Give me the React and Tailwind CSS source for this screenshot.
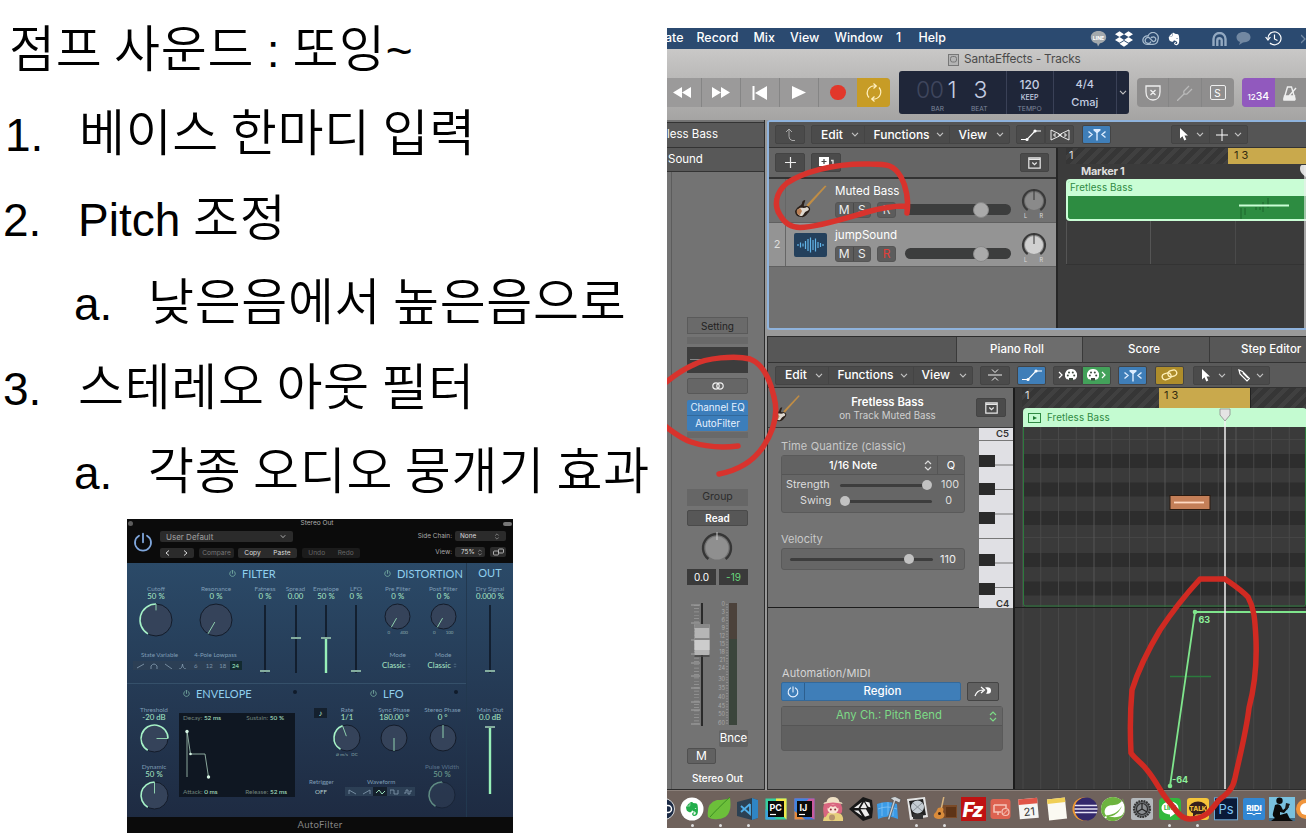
import React from "react";
import { FaDropbox, FaEvernote } from "react-icons/fa";
import { SiSpring } from "react-icons/si";

/* ---------- shared glyphs ---------- */
const Chevron = ({ className = "" }) => (
  <svg className={"h-[5px] w-[8px] shrink-0 " + className} viewBox="0 0 8 5" fill="none" stroke="#c4c4c4" strokeWidth="1.1">
    <path d="M1 .8 4 4 7 .8" />
  </svg>
);
const UpDown = ({ color = "#ddd", className = "" }) => (
  <svg className={"h-[11px] w-[8px] shrink-0 " + className} viewBox="0 0 8 11" fill="none" stroke={color} strokeWidth="1.2">
    <path d="M1 4 4 1 7 4M1 7l3 3 3-3" />
  </svg>
);
const Power = ({ color, className = "" }) => (
  <svg className={className} viewBox="0 0 20 20" fill="none" stroke={color} strokeWidth="1.8" strokeLinecap="round">
    <path d="M10 1.2v8.6M6 3.2a8 8 0 1 0 8 0" />
  </svg>
);
const Guitar = ({ className = "" }) => (
  <svg className={className} viewBox="0 0 34 34">
    <path d="M12.500 21 31 1.500l1.500.8L14 23z" fill="#c08d45" />
    <path d="M1 27c0 3 2 6 6 6 4 1 6-3 8-5 1-2 2-3 0-5-2-2-4 0-5-1s2-6 1-6-3 1-3 3-3 3-5 5z" fill="#2b211b" />
    <path d="M3 27c0 3 2 5 5 5 2-1 2-4 5-5s2-3 0-4c-3 2-6 0-7 1s-3 1-3 3z" fill="#ded8cf" />
    <path d="M3 26c-1 3 1 5 3 5l2-4-2-3z" fill="#b97f55" />
  </svg>
);
const Curve = () => (
  <svg className="h-[14px] w-[20px]" viewBox="0 0 20 14" fill="none" stroke="#fff" strokeWidth="1.2">
    <path d="M0 11.5h6L14 3h6" />
    <circle cx="6" cy="11.5" r="1.6" fill="#fff" stroke="none" />
    <circle cx="14" cy="3" r="1.6" fill="#fff" stroke="none" />
  </svg>
);
const Catch = () => (
  <svg className="h-[13px] w-[20px]" viewBox="0 0 20 13" fill="none" stroke="#dcecff" strokeWidth="1.4">
    <path d="m1.500 3.500 3.500 3-3.500 3M18.500 3.500l-3.500 3 3.500 3M10 4v8.500" />
    <path d="M6.500 1h7v1.500L10.500 5h-1L6.500 2.500z" fill="#dcecff" stroke="none" />
  </svg>
);
const Arrow = () => (
  <svg className="h-[13px] w-[9px]" viewBox="0 0 9 13" fill="#fff">
    <path d="M0 0v10.500l2.500-2.300L4.300 12.500l2-.9-1.800-4H8z" />
  </svg>
);
const ViewBox = () => (
  <svg className="h-[12px] w-[13px]" viewBox="0 0 13 12" fill="none" stroke="#e8e8e8" strokeWidth="1.200">
    <path d="M.8.8h11.400v10.400H.8zM.8 2.300h11.400M4.300 5.500l2.200 2.200 2.200-2.200" />
  </svg>
);
const Palette = () => (
  <svg className="h-[12px] w-[12px]" viewBox="0 0 12 12">
    <path d="M6 0a6 6 0 0 0-5 9.500C2 11 3 10 4 11h4c1-1 2 0 3-1.500A6 6 0 0 0 6 0z" fill="#fff" />
    <g fill="#3d4a3f"><circle cx="2.800" cy="6.500" r="1" /><circle cx="4" cy="3.500" r="1" /><circle cx="7.800" cy="3.500" r="1" /><circle cx="9.200" cy="6.500" r="1" /></g>
    <path d="M4 11.500V9h4v2.500" fill="#3d4a3f" />
  </svg>
);
const Btn = ({ className = "", bg = "bg-[#4b4b4b]", children }) => (
  <div className={"flex h-[19px] shrink-0 items-center justify-center rounded-[2px] border border-[#444] " + bg + " " + className}>{children}</div>
);

/* ---------- slide text ---------- */
const Ko = ({ children }) => <span className="font-['Noto_Sans_CJK_KR',sans-serif] text-[50px] font-[350] tracking-[.65px]">{children}</span>;
const Line = ({ mark, className, markClass, children }) => (
  <div className={"flex h-[84.4px] items-baseline whitespace-pre " + className}>
    {mark && <span className={"shrink-0 " + markClass}>{mark}</span>}
    <span>{children}</span>
  </div>
);

/* ---------- AutoFilter plug-in ---------- */
const arc = (cx, cy, r, a, b) => {
  const p = (d) => [cx + r * Math.sin((d * Math.PI) / 180), cy - r * Math.cos((d * Math.PI) / 180)];
  const [x1, y1] = p(a), [x2, y2] = p(b);
  return `M${x1} ${y1}A${r} ${r} 0 ${b - a > 180 ? 1 : 0} 1 ${x2} ${y2}`;
};
const Knob = ({ size, to, angle, dim, inner = 0.15 }) => {
  const c = size / 2, r = c - 2, t = (angle * Math.PI) / 180;
  return (
    <svg style={{ width: size, height: size }} className="shrink-0" viewBox={`0 0 ${size} ${size}`} opacity={dim ? 0.8 : 1}>
      <circle cx={c} cy={c} r={r} fill="#35435a" stroke="#141c2a" strokeWidth="1" />
      {to !== undefined && <path d={arc(c, c, r, -150, to)} fill="none" stroke="#a6f2c8" strokeWidth="1.600" />}
      <path d={`M${c + r * inner * Math.sin(t)} ${c - r * inner * Math.cos(t)}L${c + r * Math.sin(t)} ${c - r * Math.cos(t)}`} stroke="#8fd0ae" strokeWidth="1" />
    </svg>
  );
};
const Lab = ({ className = "", label, value, children }) => (
  <div className={"flex shrink-0 flex-col items-center whitespace-nowrap " + className}>
    <div className="h-[7px] text-[6.400px] text-[#7f9db5]">{label}</div>
    <div className="h-[9px] text-[7.800px] text-[#a9e8c6]">{value}</div>
    {children}
  </div>
);
const VSlider = ({ pos, fill }) => (
  <svg className="mt-[3px] h-[70px] w-[14px]" viewBox="0 0 14 70">
    <path d="M7 0v68" stroke="#0c1420" strokeWidth="1.500" />
    {fill && <path d={`M7 ${pos}V68`} stroke="#97f0b8" strokeWidth="2.400" />}
    <path d={`M2 ${pos}h10`} stroke="#84ad9f" strokeWidth="2" />
  </svg>
);
const Title = ({ className, children }) => (
  <div className={"flex h-[12px] items-center gap-[6px] text-[11px] text-[#90cfee] " + className}>
    <Power color="#90cfb8" className="h-[7px] w-[7px]" />{children}
  </div>
);
const Wave = ({ d, on }) => (
  <div className={"flex h-[9px] w-[14px] items-center justify-center " + (on ? "bg-[#15202c]" : "bg-[#2c3f55]")}>
    <svg className="h-[6px] w-[9px]" viewBox="0 0 9 6" fill="none" stroke={on ? "#a6f2c8" : "#7d94a8"} strokeWidth=".9"><path d={d} /></svg>
  </div>
);
function Plugin() {
  return (
    <div className="ml-[127px] flex h-[314px] w-[386px] flex-col overflow-hidden bg-[#0b0b0b] font-[Lato,sans-serif] leading-none">
      <div className="flex h-[9px] items-center justify-between px-px font-[Inter,sans-serif] text-[6.500px] text-[#b0b0b0]">
        <span className="h-[5px] w-[5px] rounded-full bg-[#5c5c5c]" /><span className="pr-[2px]">Stereo Out</span><span className="h-[4px] w-[9px] rounded-full bg-[#777]" />
      </div>
      <div className="flex h-[35px] font-[Inter,sans-serif]">
        <Power color="#7fa6dc" className="mt-[4px] ml-[6px] h-[21px] w-[20px]" />
        <div className="ml-[7px] flex w-[206px] flex-col gap-[6px] pt-[3px]">
          <div className="flex h-[11px] w-[133px] items-center justify-between rounded-[2px] bg-[#2b2b2b] px-[6px] text-[8px] text-[#a0a0a0]">User Default<Chevron className="scale-75" /></div>
          <div className="flex h-[10px] text-[6.600px]">
            <div className="flex w-[34px] items-center justify-around rounded-[2px] bg-[#2b2b2b]">
              <svg className="h-[6px] w-[24px]" viewBox="0 0 24 6" fill="none" stroke="#ddd"><path d="M4 .5 1 3l3 2.500M19 .5 22 3l-3 2.500" /></svg>
            </div>
            <div className="ml-[5px] flex w-[35px] items-center justify-center rounded-[2px] bg-[#222] text-[#777]">Compare</div>
            <div className="ml-[4px] flex w-[59px] items-center justify-around rounded-[2px] bg-[#2b2b2b] text-[#ddd]"><span>Copy</span><span>Paste</span></div>
            <div className="ml-[5px] flex w-[58px] items-center justify-around rounded-[2px] bg-[#1b1b1b] text-[#666]"><span>Undo</span><span>Redo</span></div>
          </div>
        </div>
        <div className="flex grow flex-col gap-[6px] pt-[3px] pr-[7px] text-[6.400px] text-[#aaa]">
          <div className="flex h-[10px] items-center justify-end gap-[3px]">Side Chain:
            <div className="flex h-full w-[51px] items-center justify-between rounded-[2px] bg-[#2b2b2b] px-[5px] text-[#ddd]">None<UpDown color="#999" className="scale-[.6]" /></div></div>
          <div className="flex h-[10px] items-center justify-end">View:
            <div className="ml-[3px] flex h-full w-[30px] items-center justify-between rounded-[2px] bg-[#2b2b2b] pr-[1px] pl-[6px] text-[#ddd]">75%<UpDown color="#999" className="scale-[.6]" /></div>
            <div className="ml-[5px] flex h-full w-[16px] items-center justify-center rounded-[2px] bg-[#2b2b2b]"><svg className="h-[8px] w-[11px]" viewBox="0 0 11 8" fill="none" stroke="#ccc" strokeWidth=".8"><rect x=".5" y="3" width="5" height="4" rx="1" /><rect x="5.500" y="1" width="5" height="4" rx="1" /></svg></div></div>
        </div>
      </div>
      <div className="flex h-[254px] bg-gradient-to-b from-[#2b4a68] to-[#1e2b42]">
        <div className="w-[340px] border-r border-[#22384f]">
          <div className="flex h-[121px] border-b border-[#35506a]">
            <div className="w-[248px]">
              <Title className="mt-[4px] ml-[102px]">FILTER</Title>
              <div className="mt-[7px] flex h-[90px]">
                <div className="flex w-[123px] flex-col">
                  <div className="flex h-[66px]">
                    <Lab className="ml-[8px] w-[42px]" label="Cutoff" value="50 %"><Knob size={36} to={0} angle={0} inner={0.6} /></Lab>
                    <Lab className="ml-[18px] w-[42px]" label="Resonance" value="0 %"><Knob size={36} angle={-150} /></Lab>
                  </div>
                  <div className="flex h-[9px] text-[6.200px] text-[#7f9db5]"><span className="ml-[14px]">State Variable</span><span className="ml-[16px]">4-Pole Lowpass</span></div>
                  <div className="ml-[6px] flex text-[6px] text-[#7d94a8]">
                    <Wave d="M1 5 8 1" /><Wave d="M1 6V3q3-4 6 0v3" /><Wave d="M1 1l7 5" /><Wave d="M1 6q3 0 3.500-5Q5 6 8 6" />
                    {["6", "12", "18"].map((n) => <span key={n} className="flex h-[9px] w-[13.500px] items-center justify-center bg-[#2c3f55]">{n}</span>)}
                    <span className="flex h-[9px] w-[12px] items-center justify-center bg-[#122a30] text-[#a6f2c8]">24</span>
                  </div>
                </div>
                <Lab className="w-[30px]" label="Fatness" value="0 %"><VSlider pos={66} /></Lab>
                <Lab className="w-[31px]" label="Spread" value="0.00"><VSlider pos={33} /></Lab>
                <Lab className="w-[30px]" label="Envelope" value="50 %"><VSlider pos={33} fill /></Lab>
                <Lab className="w-[30px]" label="LFO" value="0 %"><VSlider pos={66} /></Lab>
              </div>
            </div>
            <div className="w-[91px]">
              <Title className="mt-[4px] ml-[9px]">DISTORTION</Title>
              <div className="mt-[7px] flex">
                {[["Pre Filter", "400"], ["Post Filter", "100"]].map(([n, m]) => (
                  <Lab key={n} className="w-[45.500px]" label={n} value="0 %">
                    <Knob size={29} angle={-150} />
                    <div className="flex h-[21px] gap-[10px] text-[4.500px] text-[#8aa]"><span>0</span><span>{m}</span></div>
                    <div className="h-[8px] text-[6.400px] text-[#7f9db5]">Mode</div>
                    <div className="flex items-center text-[7.800px] text-[#a9e8c6]">Classic<UpDown color="#8ab" className="scale-[.4]" /></div>
                  </Lab>
                ))}
              </div>
            </div>
          </div>
          <div className="flex h-[133px]">
            <div className="w-[178px]">
              <div className="flex items-center justify-between pr-[8px]"><Title className="mt-[3px] ml-[56px]">ENVELOPE</Title><span className="h-[4px] w-[4px] rounded-full bg-[#101b2a]" /></div>
              <div className="mt-[8px] flex">
                <div className="ml-[4px] w-[48px]">
                  <Lab className="h-[57px] w-[46px]" label="Threshold" value="-20 dB"><Knob size={31} to={90} angle={90} /></Lab>
                  <Lab className="w-[46px]" label="Dynamic" value="50 %"><Knob size={31} to={0} angle={0} /></Lab>
                </div>
                <div className="mt-[6px] flex h-[84px] w-[116px] flex-col bg-[#0f1722] px-[4px] py-[2px] text-[6.400px] text-[#71837c]">
                  <div className="flex justify-between pr-[7px]"><span>Decay: <b className="font-normal text-[#b9eed0]">52 ms</b></span><span>Sustain: <b className="font-normal text-[#b9eed0]">50 %</b></span></div>
                  <svg className="h-[68px] w-[108px] shrink-0" viewBox="0 0 108 68" fill="none" stroke="#a9cdbb" strokeWidth=".8">
                    <path d="M4 10v46M4 10l3.500 23H22l3.500 23" /><g fill="#d6f5e4" stroke="none"><circle cx="4" cy="10.500" r="1.700" /><circle cx="7.500" cy="33" r="1.300" /><circle cx="25.500" cy="56" r="1.700" /></g>
                  </svg>
                  <div className="flex justify-between pr-[4px]"><span>Attack: <b className="font-normal text-[#b9eed0]">0 ms</b></span><span>Release: <b className="font-normal text-[#b9eed0]">52 ms</b></span></div>
                </div>
              </div>
            </div>
            <div className="w-[161px]">
              <div className="flex items-center justify-between pr-[8px]"><Title className="mt-[3px] ml-[65px]">LFO</Title><span className="h-[4px] w-[4px] rounded-full bg-[#101b2a]" /></div>
              <div className="mt-[8px] flex">
                <div className="w-[116px]">
                  <div className="flex h-[72px]">
                    <div className="mt-px ml-[9px] flex h-[10px] w-[13px] items-center justify-center bg-[#14202e] text-[8px] text-[#c8f5dc]">♪</div>
                    <Lab className="ml-[1px] w-[38px]" label="Rate" value="1/1"><Knob size={30} to={-20} angle={-20} /><span className="text-[4.500px] text-[#8aa]">⌀ m/s &nbsp; DC</span></Lab>
                    <Lab className="ml-[3px] w-[50px]" label="Sync Phase" value="180.00 °"><Knob size={30} angle={180} inner={0} /></Lab>
                  </div>
                  <div className="flex text-[6.200px] text-[#7f9db5]"><span className="ml-[4px] w-[58px]">Retrigger</span><span>Waveform</span></div>
                  <div className="mt-[2px] flex items-center"><span className="ml-[10px] w-[30px] text-[6.200px] text-[#b9cfd0]">OFF</span>
                    <Wave d="M1 5V1l7 4" /><Wave d="M1 5l7-4v4" /><Wave on d="M0 4 3 1l3 4 3-3" /><Wave d="M0 5V1h4v4h4V1" /><Wave d="M0 4h2V1h2v4h2V2h2" /></div>
                </div>
                <div className="w-[45px]">
                  <Lab className="h-[57px] w-[43px]" label="Stereo Phase" value="0 °"><Knob size={30} angle={0} inner={0} /></Lab>
                  <Lab className="w-[42px] opacity-60" label="Pulse Width" value="50 %"><Knob size={30} to={0} angle={0} inner={0.9} dim /></Lab>
                </div>
              </div>
            </div>
          </div>
        </div>
        <div className="flex w-[46px] flex-col items-center">
          <div className="mt-[4px] h-[19px] text-[11px] text-[#90cfee]">OUT</div>
          <Lab className="h-[121px]" label="Dry Signal" value="0.000 %"><VSlider pos={66} /></Lab>
          <Lab label="Main Out" value="0.0 dB"><VSlider pos={1} fill /></Lab>
        </div>
      </div>
      <div className="flex grow items-center justify-center text-[9.500px] tracking-[.3px] text-[#858585]">AutoFilter</div>
    </div>
  );
}

/* ---------- Logic: top area ---------- */
const Seg = ({ className = "", children }) => <div className={"flex shrink-0 items-center justify-center border-[#858585] " + className}>{children}</div>;
function TopBar() {
  return (
    <>
      <div className="flex h-[21px] items-center bg-[#2b4a70] text-[12.400px] font-medium whitespace-nowrap text-white">
        <span className="-ml-[2px] w-[31.500px]">ate</span><span className="w-[57px]">Record</span><span className="w-[36.500px]">Mix</span><span className="w-[44.500px]">View</span><span className="w-[61.500px]">Window</span><span className="w-[22.500px]">1</span><span className="w-[171px]">Help</span>
        <svg className="h-[16px] w-[17px]" viewBox="0 0 17 16"><path d="M8.500 0C4 0 .8 2.600.8 6.300c0 3.500 2.700 5.600 6.200 6.200l1 3 2-3.200c3.800-.8 6.200-3 6.200-6C16.200 2.600 13 0 8.500 0z" fill="#a3a9ad" /><text x="8.500" y="8.500" fontSize="5.200" fontWeight="700" textAnchor="middle" fill="#fff">LINE</text></svg>
        <FaDropbox className="ml-[8px] h-[18px] w-[18px]" />
        <svg className="ml-[9px] h-[13px] w-[17px]" viewBox="0 0 17 13" fill="none" stroke="#a8bccf" strokeWidth="1.300"><path d="M5 12.300a4.200 4.200 0 1 1 1-8.300 5 5 0 0 1 10 3.500c-.3 3-2.500 4.800-5 4.800H5z" /><path d="M9 9.500A3 3 0 1 1 7 5.500l4 4a2.300 2.300 0 1 0 0-4.500q-1.500 0-2 1" /></svg>
        <FaEvernote className="ml-[8px] h-[14px] w-[14px]" />
        <svg className="ml-[31px] h-[14px] w-[15px]" viewBox="0 0 15 14" fill="none" stroke="#93a9c1" strokeWidth="2.400"><path d="M1.500 14V7a6 6 0 0 1 12 0v7M5.300 14V8.500a2.200 2.200 0 0 1 4.400 0V14" /></svg>
        <svg className="ml-[9px] h-[13px] w-[15px]" viewBox="0 0 15 13" fill="#7288a2"><path d="M7.500 0C3 0 .5 2.500.5 5.300S3 10 4 10l-1 3 4-2.500c5 0 7.500-2.200 7.500-5.200S12 0 7.500 0z" /></svg>
        <svg className="ml-[14px] h-[15px] w-[17px]" viewBox="0 0 17 15" fill="none" stroke="#fff" strokeWidth="1.200"><path d="M3 7.500A6.500 6.500 0 1 1 5 12M.6 6 3 9l2.400-3M9.500 3.500v4.500l3 1.500" /></svg>
        <svg className="ml-[19px] h-[12px] w-[5px] shrink-0" viewBox="0 0 5 12" fill="none" stroke="#7288a2" strokeWidth="1.300"><path d="m0 2 4 4-4 4" /></svg>
      </div>
      <div className="flex h-[71px] flex-col bg-gradient-to-b from-[#c9c8c7] to-[#a5a4a3]">
        <div className="flex h-[22px] items-center pl-[281px] text-[11.800px] tracking-[-.15px] text-[#4a4a4a]">
          <svg className="mr-[5px] h-[12px] w-[11px]" viewBox="0 0 11 12" fill="#b4b4b4" stroke="#777"><rect x=".5" y=".5" width="10" height="11" /><rect x="2.500" y="2.500" width="6" height="5.500" rx="2" /></svg>
          SantaEffects - Tracks
        </div>
        <div className="flex h-[43px] items-center text-white">
          <div className="flex h-[29px] w-[223px] overflow-hidden rounded-r-[4px] bg-[#9b9a9a]">
            <Seg className="w-[34.500px] border-r pr-[4px]"><svg className="h-[11px] w-[18px]" viewBox="0 0 18 11" fill="#fff"><path d="M9 0v11L0 5.500zM18 0v11L9 5.500z" /></svg></Seg>
            <Seg className="w-[39px] border-r"><svg className="h-[11px] w-[18px]" viewBox="0 0 18 11" fill="#fff"><path d="M0 0v11l9-5.500zM9 0v11l9-5.500z" /></svg></Seg>
            <Seg className="w-[39.500px] border-r"><svg className="h-[14px] w-[15px]" viewBox="0 0 15 14" fill="#fff"><path d="M.5 0h2v14h-2zM15 0v14L3 7z" /></svg></Seg>
            <Seg className="w-[39px] border-r"><svg className="h-[13px] w-[14px]" viewBox="0 0 14 14" fill="#fff" preserveAspectRatio="none"><path d="M0 0v14l14-7z" /></svg></Seg>
            <Seg className="w-[38px]"><span className="h-[15.500px] w-[15.500px] rounded-full bg-[#e2382b]" /></Seg>
            <Seg className="w-[33px] bg-[#c79c26]"><svg className="h-[19px] w-[20px]" viewBox="0 0 20 19" fill="none" stroke="#fff0c0" strokeWidth="1.200"><path d="M5 14.500A7 7 0 0 1 9 3h3M9.500.5 12.300 3l-2.800 2.500M15 4.500A7 7 0 0 1 11 16H8M10.500 13.500 7.700 16l2.800 2.500" /></svg></Seg>
          </div>
          <div className="ml-[9px] flex h-[43px] w-[230px] rounded-[3px] bg-[#1f2639] text-[#c5cee2]">
            <div className="flex w-[107.500px] flex-col border-r border-[#3a4157]">
              <div className="flex h-[33px] items-end pb-[2px] pl-[17px] text-[23px] font-light"><span className="w-[31.500px] tracking-[-.5px] text-[#3f465e]">00</span><span className="w-[26px]">1</span><span>3</span></div>
              <div className="flex pt-[2px] text-[6.600px] text-[#7e869c]"><span className="ml-[32px] w-[40px]">BAR</span><span>BEAT</span></div>
            </div>
            <div className="flex w-[47px] flex-col items-center border-r border-[#3a4157] pt-[8px] text-[12px] font-medium">120<span className="mt-[3px] text-[7px]">KEEP</span><span className="mt-[5px] text-[6.800px] font-normal text-[#7e869c]">TEMPO</span></div>
            <div className="flex w-[63.500px] flex-col items-center gap-[7px] border-r border-[#3a4157] pt-[8px] text-[11px] font-medium"><span>4/4</span><span>Cmaj</span></div>
            <div className="flex grow items-center justify-center"><Chevron /></div>
          </div>
          <div className="ml-[8px] flex h-[29px] w-[97px] rounded-[4px] bg-[#8f8e8e]">
            <Seg className="w-[32px] border-r"><svg className="h-[16px] w-[16px]" viewBox="0 0 16 16" fill="none" stroke="#eee" strokeWidth="1.300"><path d="M1 1h14v6c0 5-3 8-7 8S1 12 1 7zM5.500 5l5 5M10.500 5l-5 5" /></svg></Seg>
            <Seg className="w-[32.500px] border-r"><svg className="h-[16px] w-[16px]" viewBox="0 0 16 16" fill="none" stroke="#b9b9b9" strokeWidth="1.300"><path d="m0 16 7-7M12 1 7 6q-1 4 3 3l5-5" /></svg></Seg>
            <Seg className="w-[32px]"><span className="flex h-[15px] w-[16px] items-center justify-center rounded-[2px] border-[1.500px] border-[#eee] text-[10px]">S</span></Seg>
          </div>
          <div className="ml-[8px] flex h-[29px] grow rounded-l-[4px] bg-[#8f8e8e]">
            <Seg className="w-[32.500px] items-baseline rounded-l-[4px] bg-[#9159be] pt-[9px] text-[10.500px] font-medium"><span className="text-[8px]">12</span>34</Seg>
            <Seg className="grow"><svg className="h-[16px] w-[16px]" viewBox="0 0 16 16" fill="none" stroke="#eee" strokeWidth="1.400"><path d="M2 14 5.500 2h4L13 14z" /><path d="M2.500 11h10v4H2zM7 11l7-8" fill="#eee" /></svg></Seg>
          </div>
        </div>
      </div>
    </>
  );
}

const Menu = ({ className, children, chev = "mr-[5px]" }) => <div className={"flex h-full items-center justify-between " + className}>{children}<Chevron className={chev} /></div>;

const PanKnob = ({ fill }) => (
  <svg className="h-[32px] w-[26px] shrink-0" viewBox="0 0 26 32">
    <path d={arc(13, 13, 11, -145, 145)} fill="none" stroke="#3a3a3a" strokeWidth="2.200" />
    <circle cx="13" cy="13" r="9" fill={fill} /><path d="M13 1v11" stroke="#333" strokeWidth="1" />
    <g fontSize="5.500" fill="#ddd"><text x="3" y="30">L</text><text x="18.500" y="30">R</text></g>
  </svg>
);
const Track = ({ n, name, icon, bg, rec, knob }) => (
  <div className={"flex h-[44px] border-b border-[#606060] " + bg}>
    <div className="flex w-[17px] shrink-0 items-center justify-center border-r border-[#666] text-[11px] text-[#ddd]">{n}</div>
    <div className="flex w-[49px] shrink-0 items-center pl-[8px]">{icon}</div>
    <div className="flex w-[70px] shrink-0 flex-col pt-[7px]">
      <span className="h-[16px] text-[11.600px] whitespace-nowrap text-white">{name}</span>
      <div className="flex h-[16px] text-[12px] text-[#eee]">
        <div className="flex w-[36px] rounded-[3px] border border-[#555] bg-[#5c5c5c]"><span className="flex w-[18px] items-center justify-center border-r border-[#494949]">M</span><span className="flex w-[17px] items-center justify-center">S</span></div>
        <div className={"ml-[6px] flex w-[19px] items-center justify-center rounded-[3px] border border-[#555] bg-[#5c5c5c] " + rec}>R</div>
      </div>
    </div>
    <div className="mt-[25px] flex h-[11px] w-[106px] shrink-0 items-center rounded-full bg-[#3c3d3d] pl-[68px]"><span className="h-[16px] w-[16px] shrink-0 rounded-full border border-[#888] bg-[#aaa]" /></div>
    <div className="mt-[9px] ml-[10px]"><PanKnob fill={knob} /></div>
  </div>
);
const hatch = "bg-[repeating-linear-gradient(135deg,#363636_0px,#363636_5px,#404040_5px,#404040_9px)]";

function Tracks() {
  return (
    <div className="relative flex h-[210px] flex-col overflow-hidden rounded-l-[3px] border-2 border-r-0 border-[#8fb3dd] bg-[#717171]">
      <div className="flex h-[26px] shrink-0 items-center border-b border-[#333] bg-[#555] text-[12px] font-medium text-white">
        <Btn className="ml-[6px] w-[30px]"><svg className="h-[13px] w-[11px]" viewBox="0 0 11 13" fill="none" stroke="#aaa"><path d="M10 12.500H7q-3-1-3-4V1M1 4l3-3 3 3" /></svg></Btn>
        <Btn className="ml-[6px] w-[199px]">
          <Menu className="w-[53px] border-r border-[#444] pl-[9px]">Edit</Menu><Menu className="w-[86px] border-r border-[#444] pl-[9px]">Functions</Menu><Menu className="w-[60px] pl-[9px]">View</Menu>
        </Btn>
        <Btn className="ml-[6px] w-[29px] rounded-r-none"><Curve /></Btn>
        <Btn className="w-[29px] rounded-l-none"><svg className="h-[12px] w-[20px]" viewBox="0 0 20 12" fill="none" stroke="#eee"><path d="M1 1v10l8.500-4V5zM19 1v10l-8.500-4V5zM3 6h2M5 4v4M8 6h4M15 4v4M15 6h2" /></svg></Btn>
        <Btn className="ml-[8px] w-[29px]" bg="bg-[#3f7eb8]"><Catch /></Btn>
        <Btn className="ml-[60px] w-[77px]"><Menu className="w-[38px] border-r border-[#444] pl-[8px]"><Arrow /></Menu><Menu className="w-[38px] pl-[6px]"><svg className="h-[12px] w-[12px]" viewBox="0 0 12 12" stroke="#fff"><path d="M6 0v12M0 6h12" /></svg></Menu></Btn>
      </div>
      <div className="flex grow">
        <div className="flex w-[287px] shrink-0 flex-col">
          <div className="flex h-[31px] shrink-0 items-center border-b-2 border-[#333] bg-[#656565]">
            <Btn className="ml-[6px] w-[30px]"><svg className="h-[11px] w-[11px]" viewBox="0 0 11 11" stroke="#eee" strokeWidth="1.200"><path d="M5.500 0v11M0 5.500h11" /></svg></Btn>
            <Btn className="ml-[6px] w-[30px]"><svg className="h-[12px] w-[15px]" viewBox="0 0 15 12"><path d="M0 0h10v9H0z" fill="#fff" /><path d="M5 2v5M2.500 4.500h5" stroke="#444" strokeWidth="1.200" /><path d="M12 3.500h2v8H6" fill="none" stroke="#ddd" strokeWidth="1.400" /></svg></Btn>
            <Btn className="ml-[179px] w-[29px]"><ViewBox /></Btn>
          </div>
          <Track n="1" name="Muted Bass" bg="bg-[#717171]" rec="text-[#ddd]" knob="#8a8a8a" icon={<Guitar className="h-[34px] w-[34px]" />} />
          <Track n="2" name="jumpSound" bg="bg-[#949494]" rec="text-[#e0403a]" knob="#d0d0d0" icon={<div className="flex h-[24px] w-[33px] items-center justify-center rounded-[2px] bg-[#24405c]"><svg className="h-[16px] w-[27px]" viewBox="0 0 27 16" stroke="#62b4e8" strokeWidth="1.200"><path d="M1 7v2M3.500 5.500v5M6 6.500v3M8.500 4v8M11 2v12M13.500 .5v15M16 3v10M18.500 1.500v13M21 5v6M23.500 6v4M26 7v2" /></svg></div>} />
        </div>
        <div className="flex grow flex-col border-l-2 border-[#262626] bg-[#3b3b3b] pl-[8px]">
          <div className={"flex h-[16px] text-[11px] text-[#ddd] " + hatch}><span className="w-[162px] pt-[2px] pl-[3px]">1</span><span className="grow bg-[#c9a94c] pt-[2px] pl-[6px] text-[#332b10]">1 3</span></div>
          <div className="flex h-[15px] items-center pl-[15px] text-[11px] font-bold tracking-[-.3px] text-[#ddd]">Marker 1</div>
          <div className="flex h-[42px] flex-col overflow-hidden rounded-l-[4px] border-2 border-r-0 border-[#c9fdd5] bg-[#2d8c41]">
            <div className="h-[15px] shrink-0 bg-[#c9fdd5] pt-[2px] pl-[2px] text-[9.800px] tracking-[.1px] text-[#2f8a43]">Fretless Bass</div>
            <svg className="h-[23px] w-[237px]" viewBox="0 0 237 23"><path d="M173 12v11M177 12v7M188 11v3M192 11v3M195 6v10M200 2v10" stroke="#1f6b30" strokeWidth="1.200" /><path d="M171 9.500h50" stroke="#c9fdd5" strokeWidth="2" /></svg>
          </div>
          <div className="flex h-[44px] border-b border-[#333]"><span className="w-[84px] border-l border-[#555]" /><span className="w-[85px] border-l border-[#555]" /><span className="grow border-l border-[#4a4a4a]" /></div>
        </div>
      </div>
      <svg className="absolute top-[43px] right-0 h-[163px] w-[6px]" viewBox="0 0 6 163"><path d="M6 0H2Q0 0 0 4t6 8z" fill="#ddd" /><path d="M5 0v163" stroke="#eee" strokeWidth="1.200" /></svg>
    </div>
  );
}

/* ---------- Logic: channel strip ---------- */
function Strip() {
  const marks = ["0", "3", "6", "9", "12", "15", "18", "21", "24", "30", "35", "40", "45", "50", "60"];
  const ys = [3, 11, 19, 27, 35, 43, 51, 59, 67, 78, 87, 96, 105, 113, 122];
  return (
    <div className="flex w-[98px] shrink-0 flex-col border-r border-b border-[#2c2c2c] bg-[#737373] text-[11.500px] text-white">
      <div className="mt-[2px] flex h-[26px] shrink-0 items-center border-t border-b border-[#333] bg-[#585858]">less Bass</div>
      <div className="flex h-[24px] shrink-0 items-center border-b border-[#333] bg-[#585858] pl-px">Sound</div>
      <div className="ml-[4px] flex grow flex-col border-l border-[#5c5c5c] pl-[15px] text-[10px]">
        <div className="mt-[145px] flex h-[17px] w-[61px] shrink-0 items-center justify-center border border-[#5a5a5a] bg-[#6a6a6a] text-[#222]">Setting</div>
        <div className="mt-[3px] h-[7px] w-[61px] shrink-0 bg-[#696969]" />
        <div className="mt-[3px] h-[26px] w-[61px] shrink-0 bg-[#3d3d3d] pt-[12px]"><div className="mx-[3px] h-px bg-[#888]" /></div>
        <div className="mt-[5px] flex h-[16px] w-[61px] shrink-0 items-center justify-center rounded-[2px] border border-[#585858] bg-[#666]"><svg className="h-[8px] w-[12px]" viewBox="0 0 12 8" fill="none" stroke="#eee" strokeWidth="1.200"><circle cx="4" cy="4" r="3.200" /><circle cx="8" cy="4" r="3.200" /></svg></div>
        <div className="mt-[6px] flex h-[31px] w-[61px] shrink-0 flex-col rounded-[2px] bg-[#3c7ebb] text-[9.800px] whitespace-nowrap text-[#e6f1ff]"><span className="flex h-[16px] items-center justify-center border-b border-[#336a9c]">Channel EQ</span><span className="flex h-[15px] items-center justify-center">AutoFilter</span></div>
        <div className="mt-px h-[6px] w-[61px] shrink-0 bg-[#696969]" />
        <div className="mt-[51px] flex h-[17px] w-[61px] shrink-0 items-center justify-center bg-[#666] text-[10.500px] text-[#2c2c2c]">Group</div>
        <div className="mt-[4px] flex h-[16px] w-[61px] shrink-0 items-center justify-center rounded-[2px] border border-[#4a4a4a] bg-[#575757] text-[10px] font-semibold">Read</div>
        <svg className="mt-[5px] ml-[14px] h-[32px] w-[32px] shrink-0" viewBox="0 0 32 32"><path d={arc(16, 17, 14, -142, 142)} fill="none" stroke="#363636" strokeWidth="2.400" /><circle cx="16" cy="17" r="11.500" fill="#8f8f8f" /><path d="M16 1v8" stroke="#ccc" /></svg>
        <div className="mt-[6px] flex h-[16px] shrink-0 gap-[3px] text-[10px]"><span className="flex w-[29px] items-center justify-center bg-[#3a3a3a]">0.0</span><span className="flex w-[29px] items-center justify-center bg-[#3a3a3a] text-[#68d67c]">-19</span></div>
        <svg className="mt-[16px] h-[128px] w-[61px] shrink-0" viewBox="0 0 61 128">
          <path d="M15 2v123" stroke="#2a2a2a" strokeWidth="2" />
          <path d="M4 4h9M4 22h9M4 53h9M4 62h9M4 75h9M4 87h9M4 101h9M4 109h9M4 123h9M4 39h4" stroke="#aaa" strokeWidth=".9" />
          <path d="M9.500 4v119" stroke="#9a9a9a" strokeWidth="5" strokeDasharray=".7 2.600" />
          <rect x="7.500" y="23" width="15" height="31" rx="1" fill="#b5b5b5" /><rect x="7.500" y="23" width="15" height="4" fill="#888" /><path d="M7.500 38h15" stroke="#555" /><rect x="7.500" y="39" width="15" height="10" fill="#ccc" /><path d="M7.500 55h15" stroke="#444" strokeWidth="1.500" />
          <rect x="42" y="2" width="8" height="122" fill="#3b453c" /><rect x="42" y="2" width="8" height="36" fill="#4c423b" />
          <path d="M40 3v120" stroke="#999" strokeWidth="2" strokeDasharray=".7 2" />
          <g fontSize="5.500" fill="#a8a8a8" textAnchor="end">{marks.map((m, i) => <text key={m} x="38" y={ys[i] + 2}>{m}</text>)}</g>
        </svg>
        <div className="mt-px ml-[32px] flex h-[17px] w-[29px] shrink-0 items-center justify-center rounded-[2px] bg-[#636363] text-[11.500px]">Bnce</div>
        <div className="mt-px flex h-[16px] w-[29px] shrink-0 items-center justify-center rounded-[2px] border border-[#505050] bg-[#616161] text-[12px]">M</div>
        <div className="mt-[9px] w-[61px] text-center text-[10px] font-medium whitespace-nowrap">Stereo Out</div>
      </div>
    </div>
  );
}

/* ---------- Logic: editor ---------- */
const HSlider = ({ className }) => <div className={"flex h-[3px] shrink-0 items-center rounded bg-[#3d3d3d] " + className}><span className="h-[10px] w-[10px] shrink-0 rounded-full bg-[#c2c2c2]" /></div>;
const cols = Array.from({ length: 16 }, (_, i) => 8 + i * 17.75);
const darkRows = [27, 55.500, 84, 126, 154.500];
const whiteLines = [12.500, 37, 61.500, 86, 110.500, 135, 159.500];

function Editor() {
  return (
    <div className="relative flex h-[454px] flex-col overflow-hidden border-t border-b border-l border-[#2c2c2c] bg-[#737373]">
      <div className="flex h-[26px] shrink-0 border-b border-[#333] bg-[#575757] text-[12px] font-medium whitespace-nowrap text-white">
        <div className="w-[188px] shrink-0" />
        <div className="flex w-[127px] shrink-0 items-center justify-center border-x border-[#3a3a3a] bg-[#6d6d6d] pr-[5px] text-[11.500px]">Piano Roll</div>
        <div className="flex w-[127px] shrink-0 items-center justify-center border-r border-[#3a3a3a] pr-[4px] text-[11.500px]">Score</div>
        <div className="flex w-[127px] shrink-0 items-center pl-[31px] text-[11.500px]">Step Editor</div>
      </div>
      <div className="flex h-[25px] shrink-0 items-center border-b border-[#333] bg-[#5a5a5a] text-[12px] font-medium text-white">
        <Btn className="ml-[7px] w-[198px]"><Menu className="w-[53px] border-r border-[#444] pl-[9px]">Edit</Menu><Menu className="w-[86px] border-r border-[#444] pl-[9px]">Functions</Menu><Menu className="w-[59px] pl-[8px]">View</Menu></Btn>
        <Btn className="ml-[7px] w-[30px]"><svg className="h-[12px] w-[14px]" viewBox="0 0 14 12" fill="none" stroke="#eee"><path d="M0 6h14M4 .5l3 3 3-3M4 11.500l3-3 3 3" /></svg></Btn>
        <Btn className="ml-[7px] w-[29px]" bg="bg-[#3f7eb8]"><Curve /></Btn>
        <Btn className="ml-[7px] w-[29px] gap-[2px] rounded-r-none"><svg className="h-[8px] w-[5px]" viewBox="0 0 5 8" fill="none" stroke="#fff" strokeWidth="1.200"><path d="m1 1 3 3-3 3" /></svg><Palette /></Btn>
        <Btn className="w-[29px] gap-[2px] rounded-l-none" bg="bg-[#43a15a]"><Palette /><svg className="h-[8px] w-[5px]" viewBox="0 0 5 8" fill="none" stroke="#fff" strokeWidth="1.200"><path d="m1 1 3 3-3 3" /></svg></Btn>
        <Btn className="ml-[7px] w-[29px]" bg="bg-[#3f7eb8]"><Catch /></Btn>
        <Btn className="ml-[8px] w-[29px]" bg="bg-[#ae8d2b]"><svg className="h-[12px] w-[17px]" viewBox="0 0 17 12" fill="none" stroke="#fff0b8" strokeWidth="1.300"><rect x="1" y="4.500" width="9" height="6" rx="3" transform="rotate(-18 5 7)" /><rect x="7" y="1.500" width="9" height="6" rx="3" transform="rotate(-18 11 5)" /></svg></Btn>
        <Btn className="ml-[9px] w-[77px]"><Menu className="w-[38px] border-r border-[#444] pl-[8px]"><Arrow /></Menu><Menu className="w-[38px] pl-[6px]"><svg className="h-[13px] w-[12px]" viewBox="0 0 12 13" fill="none" stroke="#fff" strokeWidth="1.200"><path d="m1 1 1 4 7 7 2.500-2.500-7-7zM1 1l3.500 1.500M5 4l5 5" /></svg></Menu></Btn>
      </div>
      <div className="flex h-[220px] shrink-0 border-b border-[#1c1c1c]">
        <div className="w-[245px] shrink-0">
          <div className="flex h-[40px] items-center border-b border-[#3a3a3a] bg-[#6b6b6b]">
            <Guitar className="ml-[5px] h-[28px] w-[28px] shrink-0" />
            <div className="flex w-[173px] flex-col items-center gap-[3px] pt-[2px] whitespace-nowrap"><span className="text-[11.300px] font-semibold text-white">Fretless Bass</span><span className="text-[9.700px] text-[#d0d0d0]">on Track Muted Bass</span></div>
            <Btn className="ml-[2px] w-[30px]"><ViewBox /></Btn>
          </div>
          <div className="flex">
            <div className="w-[211px] pl-[13px]">
              <div className="mt-[13px] text-[11px] tracking-[.15px] text-[#c9c9c9]">Time Quantize (classic)</div>
              <div className="mt-[3px] flex h-[58px] w-[184px] flex-col rounded-[3px] border border-[#5a5a5a] bg-[#666] text-[10.800px] text-[#ddd]">
                <div className="flex h-[19px] shrink-0 items-center border-b border-[#555] bg-[#626262] text-[11px] font-medium text-white"><span className="w-[142px] pl-[47px]">1/16 Note</span><UpDown /><span className="ml-[5px] flex h-full grow items-center justify-center border-l border-[#555] font-normal">Q</span></div>
                <div className="flex h-[20px] items-center"><span className="w-[58px] pl-[4px]">Strength</span><HSlider className="w-[92px] justify-end" /><span className="w-[27px] text-right">100</span></div>
                <div className="flex h-[12px] items-center"><span className="w-[58px] pl-[18px]">Swing</span><HSlider className="w-[92px]" /><span className="w-[20px] text-right">0</span></div>
              </div>
              <div className="mt-[21px] text-[11px] text-[#c9c9c9]">Velocity</div>
              <div className="mt-[3px] flex h-[22px] w-[184px] items-center rounded-[3px] border border-[#5a5a5a] bg-[#666] text-[11px] text-[#eee]"><HSlider className="ml-[8px] w-[143px] pl-[114px]" /><span className="ml-[7px]">110</span></div>
            </div>
            <svg className="h-[180px] w-[34px] shrink-0" viewBox="0 0 34 180">
              <rect width="34" height="180" fill="#e0e0e4" />
              {whiteLines.map((y) => <path key={y} d={`M0 ${y}h34`} stroke="#777" />)}
              {[27, 55, 84, 126, 155].map((y) => <rect key={y} y={y} width="16" height="12" fill="#2a2a2a" />)}
              <g fontSize="9.500" fontWeight="600" fill="#333"><text x="17" y="8.500">C5</text><text x="17" y="178.500">C4</text></g>
            </svg>
          </div>
        </div>
        <div className="flex grow flex-col border-l-2 border-[#1c1c1c] bg-[#3a3a3a]">
          <div className={"ml-[7px] flex h-[20px] text-[11px] text-[#ddd] " + hatch}><span className="w-[137px] pt-[2px] pl-[3px]">1</span><span className="w-[92px] border-r border-[#222] bg-[#c9a94c] pt-[2px] pl-[5px] text-[#332b10]">1 3</span></div>
          <div className="ml-[8px] flex h-[19px] items-center rounded-t-[4px] bg-[#c4fbd1] pl-[5px] text-[9.800px] tracking-[.1px] text-[#2f8a43]"><svg className="mr-[6px] h-[10px] w-[13px]" viewBox="0 0 13 10" fill="none" stroke="#2f8a43"><rect x=".5" y=".5" width="12" height="9" /><path d="M5 3v4l4-2z" fill="#1f7a33" stroke="none" /></svg>Fretless Bass</div>
          <svg className="h-[180px] w-[292px] shrink-0" viewBox="0 0 292 180">
            {darkRows.map((y) => <rect key={y} x="8" y={y} width="284" height="14" fill="#2d2d2d" />)}
            <path d="M8 12.500h284M8 110.500h284" stroke="#454545" />
            {cols.map((x, i) => <path key={x} d={`M${x} 0v180`} stroke={i % 4 === 0 ? "#5a5a5a" : "#4b4b4b"} strokeWidth=".9" />)}
            <path d="M8.500 0v177q0 2 2 2h278q2 0 2-2V0" fill="none" stroke="#2c7a3d" />
            <rect x="155" y="68.500" width="40" height="14" fill="#c47f58" stroke="#2a1a10" /><path d="M159 75.500h30" stroke="#ffdac2" strokeWidth="1.800" />
          </svg>
        </div>
      </div>
      <div className="flex grow">
        <div className="w-[245px] shrink-0 pl-[13px]">
          <div className="mt-[60px] pl-px text-[11px] tracking-[.1px] text-[#d5d5d5]">Automation/MIDI</div>
          <div className="mt-[3px] flex h-[19px]">
            <div className="flex w-[180px] rounded-[2px] border border-[#34699a] bg-[#3f7eb8]"><span className="flex w-[23px] items-center justify-center border-r border-[#2d5f8e]"><Power color="#e8f2ff" className="h-[12px] w-[12px]" /></span><span className="flex grow items-center justify-center text-[11.500px] font-medium text-white">Region</span></div>
            <Btn className="ml-[6px] w-[32px]" bg="bg-[#606060]"><svg className="h-[11px] w-[18px]" viewBox="0 0 18 11" fill="none" stroke="#fff" strokeWidth="1.200"><path d="M1 10q2-6 8-6M7 1l3.500 3L7 7" /><path d="M11 1.500q6-1 6 3t-5 3q3-3-1-6z" fill="#fff" stroke="none" /></svg></Btn>
          </div>
          <div className="mt-[5px] h-[45px] w-[222px] rounded-[3px] border border-[#5a5a5a] bg-[#606060]"><div className="flex h-[19px] items-center border-b border-[#555] bg-[#666] pr-[5px] text-[11.300px] text-[#7ddb86]"><span className="grow pl-[7px] text-center">Any Ch.: Pitch Bend</span><UpDown color="#7ddb86" /></div></div>
        </div>
        <svg className="h-[181px] w-[293px] shrink-0" viewBox="0 0 293 181">
          <rect width="293" height="181" fill="#3b3b3b" /><path d="M1 0v181" stroke="#1c1c1c" strokeWidth="2" />
          {cols.map((x) => <path key={x} d={`M${x + 2} 0v181`} stroke="#4a4a4a" strokeWidth=".9" />)}
          <path d="M157 68.500h41" stroke="#2b7a3c" strokeWidth="1.500" />
          <path d="M157 178 182 4h111" fill="none" stroke="#7fe58c" strokeWidth="1.800" /><circle cx="182" cy="4" r="2.300" fill="#7fe58c" /><circle cx="157" cy="178" r="2.300" fill="#7fe58c" />
          <g fontSize="9" fontWeight="700" fill="#8df09a"><text x="185.500" y="14.500">63</text><text x="159" y="174.500">-64</text></g>
        </svg>
      </div>
      <svg className="absolute top-[71px] left-[450.500px] h-[382px] w-[12px]" viewBox="0 0 12 382"><path d="M6 12v370" stroke="#f0f0f0" strokeWidth="1.500" /><path d="M1 1h10v6l-5 6-5-6z" fill="#e4e4e4" stroke="#8a8a8a" strokeWidth=".8" /></svg>
    </div>
  );
}

/* ---------- Dock ---------- */
const Ico = ({ dot, children }) => (
  <div className="flex w-[28.100px] shrink-0 flex-col items-center pt-[6px]">
    <svg className="h-[24px] w-[26px]" viewBox="0 0 26 24">{children}</svg>
    {dot && <span className="mt-[3px] h-[3px] w-[3px] rounded-full bg-[#ddd]" />}
  </div>
);
function Dock() {
  return (
    <div className="flex h-[38px] shrink-0 overflow-hidden border-t border-[#8b807a] bg-[#6f625c]">
      <svg className="mt-[7px] h-[22px] w-[11px] shrink-0" viewBox="0 0 11 22"><circle cx="-3" cy="11" r="10.500" fill="#1b2a45" stroke="#ddd" /><circle cx="1" cy="11" r="3.500" fill="none" stroke="#fff" strokeWidth="1.500" /></svg>
      <Ico dot><circle cx="13" cy="12" r="11.500" fill="#fff" /><svg x="5" y="4" width="16" height="16"><FaEvernote size={16} color="#23ae4c" /></svg></Ico>
      <Ico dot><path d="M1 20Q-1 6 10 3q8 0 13-2 3 20-12 21-6 1-10-2z" fill="#6cbf3a" /><path d="M3 20Q9 13 24 -1" fill="none" stroke="#3c8f22" /></Ico>
      <Ico dot><path d="M2 5 17 1l6 2v18l-6 2-15-4z" fill="#2c4153" /><path d="M17 1l6 2v18l-6 2z" fill="#2f85c4" /><path d="M15 7v10L6 9M6 15l9-8" fill="none" stroke="#50aee8" strokeWidth="1.800" /></Ico>
      <Ico><rect x="2.500" y="1.500" width="21" height="21" fill="#35d0a0" /><path d="M13 1.500h10.500v21L13 12z" fill="#f2e84a" /><path d="M2.500 22.500V12l11 10.500z" fill="#3aa4e0" /><rect x="5" y="4" width="16" height="16" fill="#0a0a0a" /><text x="6.500" y="13.500" fontSize="9" fontWeight="700" fill="#fff">PC</text><path d="M7 17.500h6" stroke="#fff" strokeWidth="1.200" /></Ico>
      <Ico><rect x="3.500" y="1.500" width="20" height="21" fill="#3a78d8" /><path d="M23.500 1.500v21L3.500 12V1.500z" fill="#c95a9c" /><path d="M3.500 1.500H18L3.500 16z" fill="#3f86e0" /><path d="M3.500 14 14 22.500H3.500z" fill="#e88a3a" /><rect x="6" y="4" width="15" height="16" fill="#0a0a0a" /><text x="8.500" y="13.500" fontSize="9" fontWeight="700" fill="#fff">IJ</text><path d="M8 17.500h6" stroke="#fff" strokeWidth="1.200" /></Ico>
      <Ico><path d="M3 24q1-7 6-9h8q7 2 6 9z" fill="#e6cf7c" /><path d="M4 20Q2 8 5 6q4-3 8-3t8 4q2 4 1 8-1 3-4 1H8q-2 5-4 4z" fill="#d9657f" /><ellipse cx="13" cy="12" rx="5.500" ry="4.500" fill="#fbe3d5" /><path d="M3.500 7q0-2 3-2 1-5 6.500-5t6.500 5q3 0 3 2-9.500-3-19 0z" fill="#f0e0c4" /><circle cx="10.800" cy="12.500" r="1" fill="#8b2d3c" /><circle cx="15.200" cy="12.500" r="1" fill="#8b2d3c" /><path d="M8 11q2-4 5-2 3-2 5 2" stroke="#d9657f" strokeWidth="1.800" fill="none" /><circle cx="12" cy="20.500" r="3" fill="#b5936d" /></Ico>
      <Ico><path d="M1 12 15 0l9 3 1 9-1 9-9 3z" fill="#171717" /><path d="m6 11 8-6-3.500 6zM6 13.500l8 5.500-3.500-5.500zM17 4.500l4.500 1 1 5-2.500-1zM12.500 12.300h5.500l3.500 6-4.500 1.500zM12.500 11l3.500-6 3 5.500-1 .8z" fill="#ededed" /></Ico>
      <Ico><path d="M1 7q10-4 20 0l1 15Q12 17 2 22z" fill="#3b9be6" /><path d="M6 6v13M12 5v13M17 6v13M2 12q9-4 19 0" stroke="#8cc8f5" strokeWidth=".7" fill="none" /><path d="m14 1 5-1.500 6 3-1.500 3.500-4-2-6 19-2-.6L17.500 3.500z" fill="#cfd3d6" stroke="#444" strokeWidth=".6" /></Ico>
      <Ico dot><path d="M3 2l18-2 3 20-18 3z" fill="#e4e4e4" /><path d="M5 4l14-2 3 16-14 2z" fill="#222" /><circle cx="13.500" cy="10" r="6.500" fill="#c4ccd2" /><path d="m9 6 9 8M18 6l-9 8" stroke="#8a9299" strokeWidth="1" /><rect x="9" y="17" width="10" height="5" fill="#333" /></Ico>
      <Ico dot><path d="M10 8h15v13H10z" fill="#7a4a28" /><path d="M14 10h10v10H14z" fill="#5e3417" /><path d="M12 -1 9 13" stroke="#d9b37c" strokeWidth="1.500" /><path d="M6 11q2-1 5 0 1 1 0 4 3 3 0 6-4 2-8 0-3-3 1-6 1-2 2-4z" fill="#d98b3a" /><circle cx="7.500" cy="16.500" r="1.500" fill="#3a2010" /></Ico>
      <Ico><path d="M1 0h25v24H1z" fill="#bf1212" /><text x="2.500" y="20" fontSize="20" fontWeight="800" fontStyle="italic" fill="#fff" letterSpacing="-1.500">Fz</text></Ico>
      <Ico><rect x="2.500" y="2" width="20" height="20" rx="3" fill="#dd6250" /><path d="M6 8h12v3M6 8v7h7M10 15v3" stroke="#f5c4b8" fill="none" strokeWidth="1.500" /><circle cx="17.500" cy="15" r="3.500" fill="none" stroke="#f5c4b8" strokeWidth="1.200" /><path d="m15.500 17 4-4" stroke="#f5c4b8" /></Ico>
      <Ico><g transform="rotate(-5 13 12)"><rect x="3" y="1.500" width="19" height="20" fill="#f6f6f4" /><rect x="3" y="1.500" width="19" height="5.500" fill="#e05548" /><text x="13" y="18.500" fontSize="11" textAnchor="middle" fill="#333">21</text></g></Ico>
      <Ico><g transform="rotate(-6 13 12)"><rect x="4" y="1.500" width="18" height="21" fill="#fbfaf2" /><rect x="4" y="1.500" width="18" height="4.500" fill="#f0cf55" /></g></Ico>
      <Ico><circle cx="12" cy="12" r="11.500" fill="#ef9a33" /><circle cx="14" cy="12" r="11.500" fill="#33286b" /><path d="M3 8.500h22M2.500 12h23M3 15.500h22" stroke="#e6e2f4" strokeWidth="1.500" /></Ico>
      <Ico><circle cx="13" cy="12" r="12" fill="#fff" /><svg x="1" y="0" width="24" height="24"><SiSpring size={24} color="#6db33f" /></svg></Ico>
      <Ico><rect x="2" y="1" width="22" height="22" rx="2" fill="#b4b8bc" /><circle cx="13" cy="12" r="8" fill="#6b6e72" stroke="#333" strokeWidth="2.200" strokeDasharray="1.800 .8" /><circle cx="13" cy="12" r="5.500" fill="#8a8d91" stroke="#2c2c2c" strokeWidth="1.200" /><path d="M13 12V6.500M13 12l5 3M13 12l-5 3" stroke="#222" strokeWidth="1.200" /></Ico>
      <Ico dot><rect x="2" y="1" width="22" height="22" rx="4" fill="#31b83c" /><path d="M13 4.500c5 0 8.500 3 8.500 6.500 0 4-5 7-8.500 9v-2.500c-5-.3-8.500-3-8.500-6.500S8 4.500 13 4.500z" fill="#fff" /><text x="13" y="13" fontSize="5.500" fontWeight="800" textAnchor="middle" fill="#31b83c">LINE</text></Ico>
      <Ico dot><rect x="2" y="1" width="22" height="22" rx="3" fill="#f6c53a" /><ellipse cx="13" cy="11" rx="9" ry="6.500" fill="#35201d" /><path d="m8 15 0 5 5-4z" fill="#35201d" /><text x="13" y="13.500" fontSize="6.500" fontWeight="800" textAnchor="middle" fill="#f0c23a">TALK</text></Ico>
      <Ico><rect x="1.500" y=".8" width="23" height="22" fill="#0a1a38" stroke="#6aa9d8" /><text x="13" y="16.500" fontSize="13" textAnchor="middle" fill="#7fc6f5">Ps</text></Ico>
      <Ico><rect x="2" y="1" width="22" height="22" rx="2" fill="#3287d3" /><text x="13" y="13.500" fontSize="8" fontWeight="800" textAnchor="middle" fill="#fff">RIDI</text><path d="M6 16.500h5l2 1.500 2-1.500h5" stroke="#fff" fill="none" /></Ico>
      <Ico><rect width="26" height="24" fill="#79c0de" /><path d="M0 24v-3h26v3z" fill="#3f6a86" /><circle cx="10.500" cy="3.800" r="3.200" fill="#0a0a0a" /><path d="M6 8q4-2 6 1l2 4 5-4 1 1-5 6-4-1v3l7-2 3 6 3 2H2l4-3q-3-2-2-5z" fill="#0a0a0a" /><path d="m17 6 4 1-3 6-2-1z" fill="#1a1a1a" /></Ico>
      <svg className="mt-[7px] h-[22px] w-[11px] shrink-0" viewBox="0 0 11 22"><circle cx="10" cy="11" r="10" fill="#f0953c" /><circle cx="10" cy="11" r="6" fill="#fff" /></svg>
    </div>
  );
}

export default function App() {
  return (
    <div className="relative flex h-[836px] w-[1315px] overflow-hidden bg-white">
      <div className="flex w-[667px] shrink-0 flex-col">
        <div className="h-[519px] pt-[3px] font-['Liberation_Sans','Noto_Sans_CJK_KR',sans-serif] text-[46px] leading-[84.400px] text-black">
          <Line className="pl-[9px]"><Ko>점프 사운드</Ko> : <Ko>또잉</Ko>~</Line>
          <Line mark="1." className="pl-[5px]" markClass="w-[74px]"><Ko>베이스 한마디 입력</Ko></Line>
          <Line mark="2." className="pl-[3px]" markClass="w-[75px]">Pitch <Ko>조정</Ko></Line>
          <Line mark="a." className="pl-[74px]" markClass="w-[74px]"><Ko>낮은음에서 높은음으로</Ko></Line>
          <Line mark="3." className="pl-[3px]" markClass="w-[75px]"><Ko>스테레오 아웃 필터</Ko></Line>
          <Line mark="a." className="pl-[74px]" markClass="w-[74px]"><Ko>각종 오디오 뭉개기 효과</Ko></Line>
        </div>
        <Plugin />
      </div>
      <div className="mt-[28px] flex h-[800px] w-[639px] shrink-0 flex-col overflow-hidden bg-[#999] font-[Inter,sans-serif] leading-none">
        <TopBar />
        <div className="flex h-[670px] shrink-0">
          <Strip />
          <div className="ml-[2px] flex w-[539px] flex-col gap-[6px]"><Tracks /><Editor /></div>
        </div>
        <Dock />
      </div>
      <svg className="absolute top-0 left-[667px] h-[836px] w-[639px]" viewBox="667 0 639 836" fill="none" stroke="#d8332d" strokeWidth="5.500" strokeLinecap="round" strokeLinejoin="round">
        <path d="M907 213C909 200 906 186 901 177C894 165 888 164 870 164C832 163 802 173 787 183C775 193 774 206 780 215C785 224 792 227.500 800 227.500C818 227 846 218 867 212C881 208 894 206 905 206" />
        <path d="M665 383C675 375 684 369 693 365C706 358 735 355 750 359C763 364 770 379 774 397C779 415 773 432 763 447C752 463 735 471 719 474M665 426C674 433 682 439 691 442C706 447 722 448 738 446" />
        <path stroke="#d02a22" d="M1225 579L1200 579C1188 592 1174 609 1160 630C1148 650 1138 671 1132 690C1130 712 1130 733 1131 753C1136 760 1142 763 1147 770C1157 782 1162 795 1170 803C1177 811 1180 819 1190 819C1206 819 1212 809 1219 800C1227 794 1233 789 1235 778C1240 755 1246 733 1249 708C1255 685 1257 665 1256 640C1255 618 1254 608 1248 597C1240 589 1232 584 1225 579" />
      </svg>
    </div>
  );
}
